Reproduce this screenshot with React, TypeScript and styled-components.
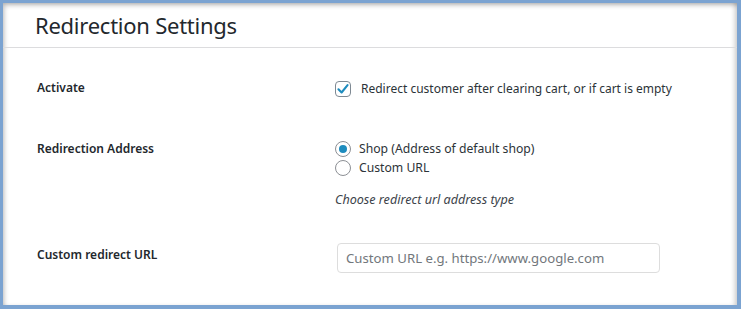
import styled, { createGlobalStyle } from "styled-components";

const GlobalStyle = createGlobalStyle`
  html, body {
    margin: 0;
    padding: 0;
    background: #ffffff;
  }
  body {
    font-family: "Noto Sans", "Open Sans", sans-serif;
    color: #23282d;
  }
`;

const Frame = styled.div`
  box-sizing: border-box;
  width: 741px;
  height: 309px;
  border-style: solid;
  border-color: #7ba3d1;
  border-width: 3px 4px 4px 3px;
  background: #ffffff;
  box-shadow: inset 3px 4px 5px -2px rgba(0, 0, 0, 0.28),
    inset -4px 0 5px -2px rgba(0, 0, 0, 0.22);
  display: flex;
  flex-direction: column;
`;

const Header = styled.header`
  height: 44px;
  padding-left: 32px;
  border-bottom: 1px solid #dcdcde;
  display: flex;
  align-items: center;
`;

const Title = styled.h1`
  margin: 0;
  font-size: 22px;
  font-weight: 400;
  letter-spacing: -0.25px;
  color: #23282d;
`;

const FormBody = styled.div`
  display: flex;
  flex-direction: column;
`;

const Row = styled.div<{ top: number }>`
  display: grid;
  grid-template-columns: 298px 1fr;
  padding-left: 34px;
  padding-top: ${(p) => p.top}px;
`;

const Label = styled.div<{ offset?: number }>`
  font-size: 12px;
  font-weight: 600;
  line-height: 18px;
  color: #23282d;
  padding-top: ${(p) => p.offset || 0}px;
`;

const Field = styled.div`
  display: flex;
  flex-direction: column;
`;

const Option = styled.label<{ gap?: number; size?: number }>`
  display: flex;
  align-items: center;
  gap: ${(p) => p.gap || 8}px;
  font-size: ${(p) => p.size || 12.2}px;
  line-height: 19px;
  color: #2c3338;
`;

const CheckBox = styled.span`
  box-sizing: border-box;
  width: 16px;
  height: 16px;
  border: 1px solid #7e8993;
  border-radius: 4px;
  display: inline-flex;
  align-items: center;
  justify-content: center;
`;

const Radio = styled.span<{ checked?: boolean }>`
  box-sizing: border-box;
  width: 16px;
  height: 16px;
  border: 1px solid #8c8f94;
  border-radius: 50%;
  display: inline-flex;
  align-items: center;
  justify-content: center;

  &::after {
    content: "";
    width: 8px;
    height: 8px;
    border-radius: 50%;
    background: ${(p) => (p.checked ? "#1e8cbe" : "transparent")};
  }
`;

const Description = styled.p`
  margin: 14px 0 0;
  font-size: 12.6px;
  font-style: italic;
  color: #3c434a;
  line-height: 18px;
`;

const UrlInput = styled.input`
  box-sizing: border-box;
  width: 323px;
  height: 30px;
  margin-left: 2px;
  padding: 0 8px;
  border: 1px solid #dddddd;
  border-radius: 4px;
  font-family: "Noto Sans", "Open Sans", sans-serif;
  font-size: 13.2px;
  color: #2c3338;
  outline: none;

  &::placeholder {
    color: #72777c;
  }
`;

export default function App() {
  return (
    <>
      <GlobalStyle />
      <Frame>
        <Header>
          <Title>Redirection Settings</Title>
        </Header>
        <FormBody>
          <Row top={31}>
            <Label>Activate</Label>
            <Field>
              <Option gap={10} size={12}>
                <CheckBox>
                  <svg width="14" height="14" viewBox="0 0 20 20">
                    <path
                      d="M3.5 10.5 L8 15 L16.5 4.5"
                      fill="none"
                      stroke="#1e8cbe"
                      strokeWidth="3"
                      strokeLinecap="round"
                      strokeLinejoin="round"
                    />
                  </svg>
                </CheckBox>
                Redirect customer after clearing cart, or if cart is empty
              </Option>
            </Field>
          </Row>
          <Row top={41}>
            <Label offset={1}>Redirection Address</Label>
            <Field>
              <Option>
                <Radio checked />
                Shop (Address of default shop)
              </Option>
              <Option>
                <Radio />
                Custom URL
              </Option>
              <Description>Choose redirect url address type</Description>
            </Field>
          </Row>
          <Row top={34}>
            <Label offset={3}>Custom redirect URL</Label>
            <Field>
              <UrlInput placeholder="Custom URL e.g. https://www.google.com" />
            </Field>
          </Row>
        </FormBody>
      </Frame>
    </>
  );
}
